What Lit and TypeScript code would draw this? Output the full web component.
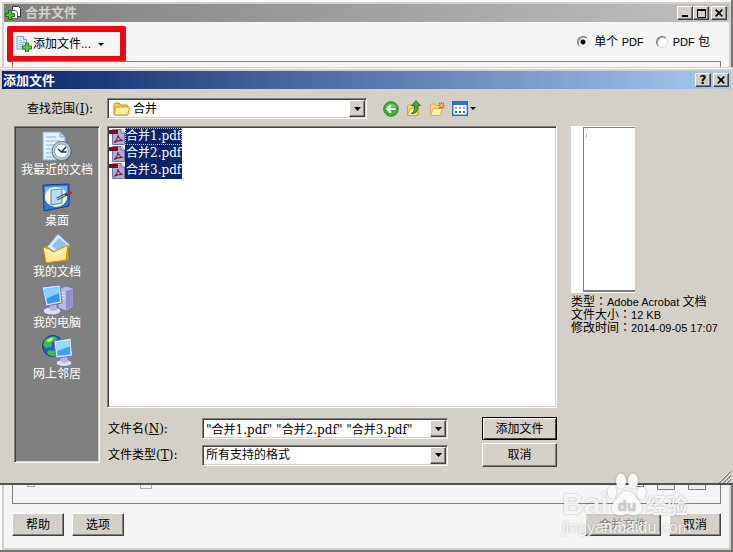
import { LitElement, html, css, svg, nothing } from "lit";
import { customElement, property, state } from "lit/decorators.js";

const addBadge = svg`<path d="M8.5 6.500h3v3h3v3h-3v3h-3v-3h-3v-3h3z" transform="translate(1 .5)" fill="#5fcf2c" stroke="#1f7d12"/>`;

const icons = {
  app: html`<svg width="17" height="16" viewBox="0 0 17 16" aria-hidden="true">
    <path d="M7.500 1.500h6l2 2v8h-8z" fill="#fff" stroke="#333"/>
    <path d="M5 5.500h5.500l2 2v6H5z" fill="#fff" stroke="#555"/>
    <path d="M3.500 5.500h3v3h3v3h-3v3h-3v-3h-3v-3h3z" fill="#4fc42a" stroke="#17750f"/>
  </svg>`,
  add: html`<svg width="16" height="16" viewBox="0 0 16 16" aria-hidden="true">
    <path d="M1 .5h6.500l3 3V13H1z" fill="#d9ecfa" stroke="#7ba6cf"/>
    <path d="M7.500.5v3h3" fill="#fff" stroke="#7ba6cf"/>
    <path d="M3 4.500h3M3 6.500h6M3 8.500h5M3 10.500h3" stroke="#8fb8de"/>
    ${addBadge}
  </svg>`,
  folder: html`<svg width="17" height="14" viewBox="0 0 17 14" aria-hidden="true">
    <path d="M1 12V2.500Q1 1 2.500 1h3.500l1.500 2h6q1.500 0 1.500 1.500V12q0 1-1 1H2q-1 0-1-1z" fill="#f3cf5b" stroke="#b98a1c"/>
    <path d="M3.500 5h12q1 0 .8 1l-1.300 6q-.2 1-1 1H2q-1 0-.8-1l1.300-6q.2-1 1-1z" fill="#fdeea0" stroke="#c79a2a"/>
  </svg>`,
  back: html`<svg width="16" height="16" viewBox="0 0 16 16" aria-hidden="true">
    <circle cx="8" cy="8" r="7.300" fill="#3fae3a" stroke="#2b8a2b"/>
    <path d="M3 6a5.500 5 0 0 1 10 0z" fill="#8bdc7e" opacity=".7"/>
    <path d="M12.500 8H4.500M8 4.200 4.200 8 8 11.800" fill="none" stroke="#fff" stroke-width="2"/>
  </svg>`,
  up: html`<svg width="16" height="17" viewBox="0 0 16 17" aria-hidden="true">
    <path d="M1.500 15.500V6l1-1h3l1 1.500h6v8l-1 1z" fill="#f8dc72" stroke="#d2a52f"/>
    <path d="m1.500 15.500 2.500-7h9l-2 7z" fill="#fdf0a6" stroke="#d2a52f"/>
    <path d="M5 13.500q4-1 3.500-8H5.500L10 .5l4.500 5H12q.5 9-7 8z" fill="#3fa83a" stroke="#1f6d20" stroke-width=".8"/>
  </svg>`,
  fresh: html`<svg width="16" height="16" viewBox="0 0 16 16" aria-hidden="true">
    <path d="M1.500 14.500V4l1-1h3l1 1.500h5v9l-1 1z" fill="#f8dc72" stroke="#dcb04a"/>
    <path d="m1.500 14.500 2.500-7h9.500l-2.500 7z" fill="#fdf0a6" stroke="#dcb04a"/>
    <path d="M12.500 1v7M9 4.500h7M10 2l5 5M15 2l-5 5" stroke="#e2603a" stroke-width="1.200"/>
    <circle cx="12.500" cy="4.500" r="1.300" fill="#ffd9a0"/>
  </svg>`,
  views: html`<svg width="16" height="15" viewBox="0 0 16 15" aria-hidden="true">
    <path d="M.7.7h14.600v13.600H.7z" fill="#fff" stroke="#2a6fc0" stroke-width="1.400"/>
    <path d="M0 0h16v4H0z" fill="#2d74c8"/>
    <path d="M3 6h2v2H3zM7 6h2v2H7zM11 6h2v2h-2z" fill="#8b99ad"/>
    <path d="M3 10h2v2H3zM7 10h2v2H7zM11 10h2v2h-2z" fill="#3e5f8c"/>
  </svg>`,
  pdf: html`<svg width="16" height="16" viewBox="0 0 16 16" aria-hidden="true">
    <path d="M3.500.5H12L15.500 4v11.500h-12z" fill="#b0acd0" stroke="#77749e"/>
    <path d="M12 .5V4h3.500" fill="#e4e2f2" stroke="#77749e"/>
    <path d="M0 1h9v4H0z" fill="#7a0f2a"/>
    <path d="M5 13.500q3.500-2.500 4-7.500 1 4.500 5 5.500-4.500-.5-9 2z" fill="none" stroke="#7a1f4a" stroke-width="1.100"/>
  </svg>`,
  recent: html`<svg width="32" height="32" viewBox="0 0 32 32" aria-hidden="true">
    <path d="M2 1h17l5 5v23H2z" fill="#e4f1ff" stroke="#7fa8dc"/>
    <path d="M19 1v5h5" fill="#b4d2f5" stroke="#7fa8dc"/>
    <path d="M5 6h10M5 10h14M5 14h9M5 18h7M5 22h7M5 26h9" stroke="#a6c5ec" stroke-width="1.500"/>
    <circle cx="21" cy="21" r="10" fill="#525b67" opacity=".5"/>
    <circle cx="20.500" cy="20" r="9.500" fill="#bccbd8" stroke="#66788c"/>
    <circle cx="20.500" cy="20" r="7" fill="#effaff" stroke="#8fa4b7"/>
    <path d="m17 18 3.500 3 4.500-5M20.500 21h5" stroke="#26394f" stroke-width="1.600" fill="none"/>
  </svg>`,
  desktop: html`<svg width="32" height="32" viewBox="0 0 32 32" aria-hidden="true">
    <path d="m2 3 26-1v22L3 29z" fill="#2d7bcf" stroke="#0f3f91"/>
    <path d="m4 5 22-1v6L4 19z" fill="#78b8f0"/>
    <ellipse cx="15" cy="15" rx="11" ry="10" fill="#fff7d4"/>
    <path d="m10 8 11-1v14l-11 2z" fill="#b9dcf8" stroke="#4f86bd"/>
    <path d="m16 17 10-5" stroke="#274966" stroke-width="3"/>
    <path d="m16 17 8-4" stroke="#d1e3f2"/>
    <path d="m25 12 5-3 1.500 2-5 3z" fill="#b32a35"/>
  </svg>`,
  documents: html`<svg width="32" height="32" viewBox="0 0 32 32" aria-hidden="true">
    <path d="M3 29V15l2-3h6l2 3h15v11l-3 3z" fill="#d9a732" stroke="#8f6a18"/>
    <path d="m6 14 11-13 12 11-8 12z" fill="#d5ecff" stroke="#77a3cf"/>
    <path d="m11 13 7-8 7 6-6 8z" fill="#8fc1ee"/>
    <path d="M2 14q7 1 10 5l15-7-2 15L5 30z" fill="#fce98e" stroke="#b98d26"/>
    <path d="M6 18q5 1 7 4l11-5" fill="none" stroke="#fffbd4" stroke-width="1.500"/>
  </svg>`,
  computer: html`<svg width="32" height="32" viewBox="0 0 32 32" aria-hidden="true">
    <path d="m17 5 8-3 7 2v19l-7 4-8-3z" fill="#b9b9e6" stroke="#7474b0"/>
    <path d="m25 7 6-2v17l-6 4z" fill="#8f8fcb"/>
    <path d="m19 8 5 1M19 11l5 1M19 14l5 1" stroke="#f0f0ff"/>
    <ellipse cx="11" cy="27" rx="9" ry="4" fill="#dedff7" stroke="#7172ab"/>
    <path d="m8 20 7-1 1 7q-4 2-7 0z" fill="#b5b6e2"/>
    <path d="m1 3 18-2 2 18-16 3z" fill="#e2e6fb" stroke="#6976b4"/>
    <path d="m3 5 14.500-2 1.500 14.500L6.500 20z" fill="#2f9bf0"/>
    <path d="m3 5 14.500-2 .7 6L5 15z" fill="#86d2ff"/>
  </svg>`,
  network: html`<svg width="32" height="32" viewBox="0 0 32 32" aria-hidden="true">
    <circle cx="12" cy="11" r="10.500" fill="#1e62c8" stroke="#143c8c"/>
    <path d="M4 5q5-5 11-3l2 4-6 1-1 5-5 1-3-3zM8 15l6 1 1 5q-6 1-9-3z" fill="#3fbf3a"/>
    <path d="M5 6q4-4 8-3l-4 4z" fill="#b6f39a"/>
    <ellipse cx="23" cy="28" rx="8" ry="3.500" fill="#dedff7" stroke="#7172ab"/>
    <path d="m19 21 7-1 1 7q-4 2-7 0z" fill="#b5b6e2"/>
    <path d="m13 6 17-3 1.500 18L15 23z" fill="#e2e6fb" stroke="#6976b4"/>
    <path d="m15 8 13.500-2.500 1 14L16.500 21z" fill="#3ea4ea"/>
    <path d="m15 8 13.500-2.500.4 6L16 16z" fill="#93dcff"/>
  </svg>`,
  arrow: html`<svg width="7" height="4" viewBox="0 0 7 4" aria-hidden="true"><path d="M0 0h7L3.500 4z" fill="#000"/></svg>`,
  smallArrow: html`<svg width="6" height="3" viewBox="0 0 6 3" aria-hidden="true"><path d="M0 0h6L3 3z" fill="#000"/></svg>`,
  minimize: html`<svg width="9" height="8" viewBox="0 0 9 8" aria-hidden="true"><path d="M1 6h6v2H1z"/></svg>`,
  maximize: html`<svg width="9" height="9" viewBox="0 0 9 9" aria-hidden="true"><path d="M.5 1h8v7.500h-8z" fill="none" stroke="#000"/><path d="M0 0h9v2H0z"/></svg>`,
  close: html`<svg width="8" height="8" viewBox="0 0 8 8" aria-hidden="true"><path d="m.7.7 6.600 6.600M7.300.7.7 7.300" stroke="#000" stroke-width="1.700"/></svg>`,
};

const base = css`
  * { box-sizing: border-box; }
  svg { display: block; flex: none; }
  button, input, select { font: inherit; color: inherit; margin: 0; }
  .titlebar {
    display: flex;
    align-items: center;
    height: 18px;
    flex: none;
    padding: 0 2px 0 1px;
    font-size: 13px;
    line-height: 18px;
    font-weight: bold;
  }
  .titlebar h1, .titlebar h2 {
    font: inherit;
    margin: 0;
    flex: 1;
  }
  .caption {
    display: grid;
    place-items: center;
    width: 16px;
    height: 14px;
    padding: 0;
    background: #d4d0c8;
    border: 1px solid;
    border-color: #fff #404040 #404040 #fff;
    box-shadow: inset -1px -1px #808080;
    font: bold 12px/12px "DejaVu Sans", sans-serif;
    color: #000;
  }
  .caption + .close { margin-left: 2px; }
  .push {
    height: 23px;
    padding: 0 13px;
    line-height: 14px;
    background: #d4d0c8;
    border: 1px solid;
    border-color: #fff #404040 #404040 #fff;
    box-shadow: inset -1px -1px #808080;
    white-space: nowrap;
  }
  .push:disabled { color: #808080; text-shadow: 1px 1px #fff; }
  .latin { font-size: 11px; }
`;

@customElement("combo-field")
class ComboField extends LitElement {
  @property() value = "";
  @property() label = "";
  @property({ type: Boolean }) editable = false;
  @property({ attribute: false }) icon: unknown = nothing;

  static styles = [base, css`
    :host { display: block; min-width: 0; }
    .box {
      display: flex;
      align-items: center;
      height: 21px;
      background: #fff;
      border: 1px solid;
      border-color: #808080 #fff #fff #808080;
      box-shadow: inset 1px 1px #404040, inset -1px -1px #d4d0c8;
      padding: 1px 1px 1px 3px;
    }
    .icon { padding: 0 3px 0 2px; }
    .field {
      flex: 1;
      min-width: 0;
      height: 17px;
      padding: 0;
      border: 0;
      outline: 0;
      background: none;
      appearance: none;
    }
    .drop {
      display: grid;
      place-items: center;
      width: 16px;
      height: 17px;
      padding: 0;
      background: #d4d0c8;
      border: 1px solid;
      border-color: #fff #404040 #404040 #fff;
      box-shadow: inset -1px -1px #808080;
    }
  `];

  render() {
    return html`<div class="box">
      ${this.icon === nothing ? nothing : html`<span class="icon">${this.icon}</span>`}
      ${this.editable
        ? html`<input class="field" type="text" aria-label=${this.label} .value=${this.value} />`
        : html`<select class="field" aria-label=${this.label}><option>${this.value}</option></select>`}
      <button class="drop" type="button" tabindex="-1" aria-label="展开">${icons.arrow}</button>
    </div>`;
  }
}

@customElement("file-dialog")
class FileDialog extends LitElement {
  @state() private selected = new Set([0, 1, 2]);

  private files = ["合并1.pdf", "合并2.pdf", "合并3.pdf"];
  private places = [
    { name: "我最近的文档", icon: icons.recent },
    { name: "桌面", icon: icons.desktop },
    { name: "我的文档", icon: icons.documents },
    { name: "我的电脑", icon: icons.computer },
    { name: "网上邻居", icon: icons.network },
  ];

  static styles = [base, css`
    :host {
      display: flex;
      flex-direction: column;
      position: relative;
      background: #d4d0c8;
      padding: 2px 2px 0;
      border-top: 1px solid #d4d0c8;
      border-bottom: 2px solid #505050;
      box-shadow: inset 0 1px #fff;
      font-family: "DejaVu Serif", "Noto Sans CJK SC", sans-serif;
    }
    .titlebar {
      color: #fff;
      margin-top: 1px;
      background: linear-gradient(90deg, #0a246a, #a6caf0);
      font-family: "Noto Sans CJK SC", sans-serif;
    }
    .body {
      flex: 1;
      display: grid;
      grid-template-columns: 86px minmax(0, 1fr) 155px;
      grid-template-rows: 37px 1fr;
      column-gap: 7px;
      padding: 0 12px 16px;
    }
    .lookup {
      grid-column: 1 / -1;
      display: flex;
      align-items: center;
      padding: 2px 0 0 13px;
    }
    .lookup .label { width: 80px; }
    .lookup combo-field { width: 260px; }
    .tools { display: flex; align-items: center; gap: 7px; padding-left: 16px; }
    .tool {
      display: flex;
      align-items: center;
      gap: 2px;
      padding: 0;
      border: 0;
      background: none;
    }
    .places {
      display: flex;
      flex-direction: column;
      gap: 5px;
      margin-bottom: 4px;
      padding: 4px 0;
      background: #808080;
      border: 1px solid;
      border-color: #808080 #fff #fff #808080;
      box-shadow: inset 1px 1px #404040, inset -1px -1px #d4d0c8;
    }
    .place {
      display: flex;
      flex-direction: column;
      align-items: center;
      padding: 0;
      border: 0;
      background: none;
      color: #fff;
      line-height: 14px;
      white-space: nowrap;
    }
    .main { display: flex; flex-direction: column; gap: 9px; }
    .files {
      flex: 1;
      list-style: none;
      margin: 0;
      padding: 1px;
      background: #fff;
      border: 1px solid;
      border-color: #808080 #fff #fff #808080;
      box-shadow: inset 1px 1px #404040, inset -1px -1px #d4d0c8;
    }
    .file { display: flex; align-items: center; height: 17px; }
    .name {
      height: 17px;
      line-height: 15px;
      padding: 0;
      border: 1px solid transparent;
      background: none;
    }
    .name.on { background: #0a246a; color: #fff; border-color: #0a246a; }
    .name.focus { border: 1px dotted #d8c890; }
    .form {
      display: grid;
      grid-template-columns: 95px minmax(0, 1fr) 75px;
      grid-template-rows: 23px 24px;
      align-items: center;
      row-gap: 3px;
    }
    .form .label { padding-left: 1px; }
    .form .push { padding: 0; align-self: stretch; height: auto; }
    .form combo-field { margin-right: 34px; }
    .form .default { border-color: #000; box-shadow: inset 1px 1px #fff, inset -1px -1px #404040; }
    .preview { padding-left: 7px; line-height: 13px; }
    .sheet { width: 64px; height: 167px; padding: 1px 0 1px 12px; background: #fff; margin-bottom: 3px; }
    .page { height: 100%; border: solid #808080; border-width: 1px 0 2px 1px; padding: 6px 2px; }
    .mark { width: 1px; height: 3px; background: #aaa; }
    .info { margin: 0; font-family: "Liberation Sans", "Noto Sans CJK TC", sans-serif; }
    .row { display: flex; height: 13px; white-space: nowrap; }
    .row dt, .row dd { margin: 0; }
    .grip { position: absolute; right: 2px; bottom: 0; }
  `];

  private toggle(i: number) {
    const next = new Set(this.selected);
    next.has(i) ? next.delete(i) : next.add(i);
    this.selected = next;
  }

  render() {
    const names = this.files.filter((_, i) => this.selected.has(i)).map((f) => `"${f}"`).join(" ");
    return html`
      <header class="titlebar">
        <h2>添加文件</h2>
        <button class="caption" aria-label="帮助">?</button>
        <button class="caption close" aria-label="关闭">${icons.close}</button>
      </header>
      <div class="body">
        <div class="lookup">
          <span class="label">查找范围(<u>I</u>):</span>
          <combo-field label="查找范围" value="合并" .icon=${icons.folder}></combo-field>
          <div class="tools">
            <button class="tool" aria-label="后退">${icons.back}</button>
            <button class="tool" aria-label="向上">${icons.up}</button>
            <button class="tool" aria-label="新建文件夹">${icons.fresh}</button>
            <button class="tool" aria-label="查看">${icons.views}${icons.smallArrow}</button>
          </div>
        </div>
        <nav class="places">
          ${this.places.map((p) => html`<button class="place">${p.icon}<span>${p.name}</span></button>`)}
        </nav>
        <div class="main">
          <ul class="files">
            ${this.files.map((f, i) => html`<li class="file">${icons.pdf}<button
              class="name ${this.selected.has(i) ? "on" : ""} ${i === 0 ? "focus" : ""}"
              aria-pressed=${this.selected.has(i)}
              @click=${() => this.toggle(i)}>${f}</button></li>`)}
          </ul>
          <div class="form">
            <span class="label">文件名(<u>N</u>):</span>
            <combo-field editable label="文件名" .value=${names}></combo-field>
            <button class="push default">添加文件</button>
            <span class="label">文件类型(<u>T</u>):</span>
            <combo-field label="文件类型" value="所有支持的格式"></combo-field>
            <button class="push">取消</button>
          </div>
        </div>
        <aside class="preview">
          <div class="sheet"><div class="page"><div class="mark"></div></div></div>
          <dl class="info">
            <div class="row"><dt>类型：</dt><dd><span class="latin">Adobe Acrobat</span> 文档</dd></div>
            <div class="row"><dt>文件大小：</dt><dd class="latin">12 KB</dd></div>
            <div class="row"><dt>修改时间：</dt><dd class="latin">2014-09-05 17:07</dd></div>
          </dl>
        </aside>
      </div>
      <svg class="grip" width="12" height="12" viewBox="0 0 12 12" aria-hidden="true">
        <path d="M0 12 12 0M4 12l8-8M8 12l4-4" stroke="#808080" stroke-width="1.600"/>
        <path d="M-1 12 11 0M3 12l9-9M7 12l5-5" stroke="#fff" stroke-width=".8"/>
      </svg>`;
  }
}

@customElement("app-root")
class AppRoot extends LitElement {
  static styles = [base, css`
    :host {
      display: grid;
      position: relative;
      min-height: 100vh;
      font: 12px/16px "Liberation Sans", "Noto Sans CJK SC", sans-serif;
      color: #000;
      background: #fafaf7;
    }
    .frame {
      grid-area: 1 / 1;
      display: grid;
      border: solid #777;
      border-width: 0 2px 2px 0;
    }
    .window {
      display: flex;
      flex-direction: column;
      margin: 2px 0 0 2px;
      background: #f5f5f5;
      border: 2px solid #d4d0c8;
    }
    .window .titlebar {
      color: #d4d0c8;
      background: linear-gradient(90deg, #808080, #c0c0c0);
    }
    .window h1 { padding-left: 3px; }
    .bar {
      display: flex;
      align-items: flex-start;
      justify-content: space-between;
      padding: 4px 19px 0 3px;
    }
    .add {
      display: flex;
      align-items: center;
      gap: 1px;
      height: 36px;
      padding: 0 16px 0 3px;
      background: #f5f5f5;
      border: 6px solid #ea0a12;
      border-radius: 2px;
      white-space: nowrap;
    }
    .add svg:last-child { margin-left: 6px; }
    .modes { display: flex; gap: 12px; padding-top: 8px; }
    .mode { display: flex; align-items: center; gap: 5px; }
    .radio {
      appearance: none;
      width: 12px;
      height: 12px;
      border: 1px solid;
      border-color: #707070 #ddd #ddd #707070;
      border-radius: 50%;
      background: #fff;
      box-shadow: inset 1px 1px #aaa;
    }
    .radio:checked { background: radial-gradient(circle, #000 2px, #fff 3px); }
    .panel {
      flex: 1;
      display: flex;
      align-items: flex-end;
      margin: -1px 8px 0;
      padding: 0 14px 11px;
      border: 1px solid #808080;
    }
    .tray { display: flex; flex: 1; gap: 13px; align-items: flex-start; height: 24px; }
    .stub { width: 8px; height: 19px; border: 1px solid #aaa; }
    .stub.page { width: 12px; height: 21px; margin-left: 92px; }
    .stub.up { width: 12px; margin-left: auto; border-color: #808080; }
    .stub.key { width: 18px; height: 22px; background: #eee; border-color: #808080; }
    .actions {
      display: flex;
      gap: 8px;
      padding: 9px 8px 12px;
    }
    .merge { margin-left: auto; }
    file-dialog { grid-area: 1 / 1; margin: 67px 0; min-width: 0; }
    .watermark {
      position: absolute;
      right: 43px;
      bottom: 15px;
      width: 128px;
      color: #ffffffd9;
      font-weight: bold;
      pointer-events: none;
      text-shadow: 0 0 2px #0000004d;
    }
    .brand { display: flex; align-items: flex-end; height: 44px; }
    .bai { font-size: 30px; line-height: 30px; }
    .jy { font-size: 21px; line-height: 26px; }
    .paw { margin: 0 -1px 2px -2px; filter: drop-shadow(0 0 1px #0000004d); }
    .url { font-size: 16px; line-height: 18px; font-weight: normal; }
  `];

  render() {
    return html`
      <div class="frame">
        <main class="window">
          <header class="titlebar">
            ${icons.app}
            <h1>合并文件</h1>
            <button class="caption" aria-label="最小化">${icons.minimize}</button>
            <button class="caption" aria-label="最大化">${icons.maximize}</button>
            <button class="caption close" aria-label="关闭">${icons.close}</button>
          </header>
          <div class="bar">
            <button class="add">${icons.add}<span>添加文件...</span>${icons.smallArrow}</button>
            <div class="modes">
              <label class="mode"><input class="radio" type="radio" name="mode" checked /><span>单个 <span class="latin">PDF</span></span></label>
              <label class="mode"><input class="radio" type="radio" name="mode" /><span><span class="latin">PDF</span> 包</span></label>
            </div>
          </div>
          <section class="panel">
            <div class="tray">
              <span class="stub"></span>
              <span class="stub page"></span>
              <span class="stub up"></span>
              <span class="stub key"></span>
              <span class="stub key"></span>
            </div>
          </section>
          <footer class="actions">
            <button class="push">帮助</button>
            <button class="push">选项</button>
            <button class="push merge" disabled>合并文件</button>
            <button class="push">取消</button>
          </footer>
        </main>
      </div>
      <file-dialog></file-dialog>
      <div class="watermark">
        <div class="brand">
          <span class="bai">Bai</span>
          <svg class="paw" width="40" height="44" viewBox="0 0 40 44">
            <g fill="#fff" fill-opacity=".92">
              <ellipse cx="14" cy="8" rx="5" ry="7.500"/>
              <ellipse cx="26" cy="8" rx="5" ry="7.500"/>
              <ellipse cx="5" cy="19" rx="4.500" ry="6.500"/>
              <ellipse cx="34.500" cy="20" rx="4.500" ry="6.500"/>
              <path d="M20 18c6 0 8 6 12 10 5 5 4 13-3 14-4 1-6-1-9-1s-5 2-9 1C4 41 3 33 8 28c4-4 6-10 12-10z"/>
            </g>
            <text x="20" y="38" text-anchor="middle" font-family="Liberation Sans, sans-serif" font-weight="bold" font-size="15" fill="#ccc">du</text>
          </svg>
          <span class="jy">经验</span>
        </div>
        <div class="url">jingyan.baidu.com</div>
      </div>`;
  }
}
